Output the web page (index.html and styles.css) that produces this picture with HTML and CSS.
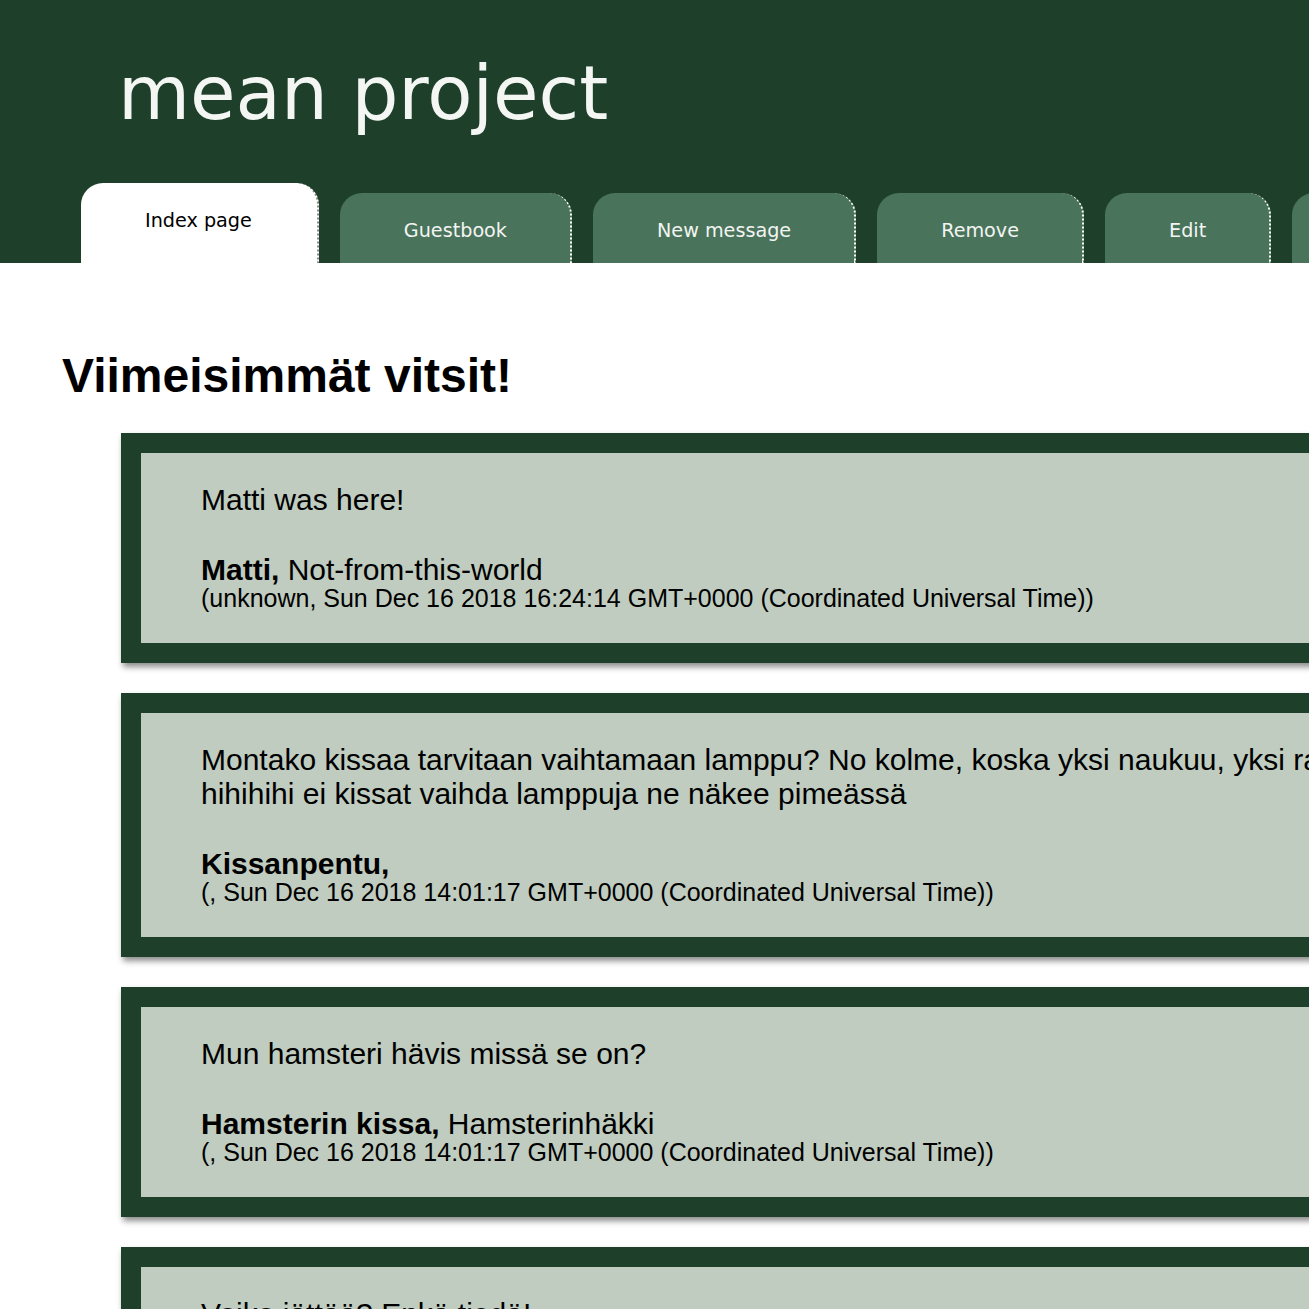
FILE: index.html
```html
<!DOCTYPE html>
<html lang="fi">
<head>
<meta charset="utf-8">
<title>mean project</title>
<link rel="stylesheet" href="styles.css">
</head>
<body>
<header class="site-header">
  <h1 class="logo">mean project</h1>
  <nav class="tabs">
    <a class="tab tab-active" href="#">Index page</a>
    <a class="tab" href="#">Guestbook</a>
    <a class="tab" href="#">New message</a>
    <a class="tab" href="#">Remove</a>
    <a class="tab" href="#">Edit</a>
    <a class="tab" href="#">Login</a>
  </nav>
</header>
<main class="content">
  <h2 class="page-title">Viimeisimmät vitsit!</h2>
  <div class="joke">
    <div class="joke-inner">
      <p class="message">Matti was here!</p>
      <div class="author"><b>Matti,</b> Not-from-this-world</div>
      <div class="date">(unknown, Sun Dec 16 2018 16:24:14 GMT+0000 (Coordinated Universal Time))</div>
    </div>
  </div>
  <div class="joke">
    <div class="joke-inner">
      <p class="message">Montako kissaa tarvitaan vaihtamaan lamppu? No kolme, koska yksi naukuu, yksi raapii ja yksi nukkuu<br>hihihihi ei kissat vaihda lamppuja ne näkee pimeässä</p>
      <div class="author"><b>Kissanpentu,</b> </div>
      <div class="date">(, Sun Dec 16 2018 14:01:17 GMT+0000 (Coordinated Universal Time))</div>
    </div>
  </div>
  <div class="joke">
    <div class="joke-inner">
      <p class="message">Mun hamsteri hävis missä se on?</p>
      <div class="author"><b>Hamsterin kissa,</b> Hamsterinhäkki</div>
      <div class="date">(, Sun Dec 16 2018 14:01:17 GMT+0000 (Coordinated Universal Time))</div>
    </div>
  </div>
  <div class="joke">
    <div class="joke-inner">
      <p class="message">Voiko jättää? Enkä tiedä!</p>
      <div class="author"><b>Kissa,</b> </div>
      <div class="date">(, Sun Dec 16 2018 14:01:17 GMT+0000 (Coordinated Universal Time))</div>
    </div>
  </div>
</main>
</body>
</html>
```
FILE: styles.css
```css
html, body {
  margin: 0;
  padding: 0;
  overflow: hidden;
  background: #ffffff;
}

body {
  font-family: "Liberation Sans", Arial, sans-serif;
  color: #000;
}

.site-header {
  background: #1e3f29;
  padding-top: 57px;
}

.logo {
  margin: 0 0 53px 118px;
  font-family: "DejaVu Sans", Verdana, sans-serif;
  font-weight: normal;
  font-size: 74px;
  line-height: 73px;
  color: #f4f6f4;
  white-space: nowrap;
}

.tabs {
  display: flex;
  align-items: flex-end;
  gap: 21px;
  padding-left: 81px;
  height: 80px;
  white-space: nowrap;
}

.tab {
  box-sizing: border-box;
  flex: none;
  height: 70px;
  padding: 26px 63px 0 64px;
  background: #4a735b;
  color: #f2f5f2;
  border-right: 2px dotted #ffffff;
  border-radius: 22px 22px 0 0;
  font-family: "DejaVu Sans", Verdana, sans-serif;
  font-size: 19.2px;
  text-decoration: none;
}

.tab-active {
  height: 80px;
  padding-right: 65px;
  background: #ffffff;
  color: #000;
  border-right-color: #8a8a8a;
}

.content {
  padding-top: 85px;
}

.page-title {
  margin: 0 0 30px 62px;
  font-size: 48px;
  font-weight: bold;
}

.joke {
  width: 2400px;
  margin: 0 0 30px 121px;
  border: 20px solid #1e3f29;
  box-shadow: 2px 4px 6px rgba(0, 0, 0, 0.45);
}

.joke-inner {
  background: #bfccbf;
  padding: 30px 60px 31px 60px;
}

.message {
  margin: 0 0 39px 0;
  font-size: 30px;
  white-space: nowrap;
}

.author {
  font-size: 30px;
  line-height: 28px;
  white-space: nowrap;
}

.date {
  font-size: 25px;
  line-height: 28px;
  white-space: nowrap;
}
```
